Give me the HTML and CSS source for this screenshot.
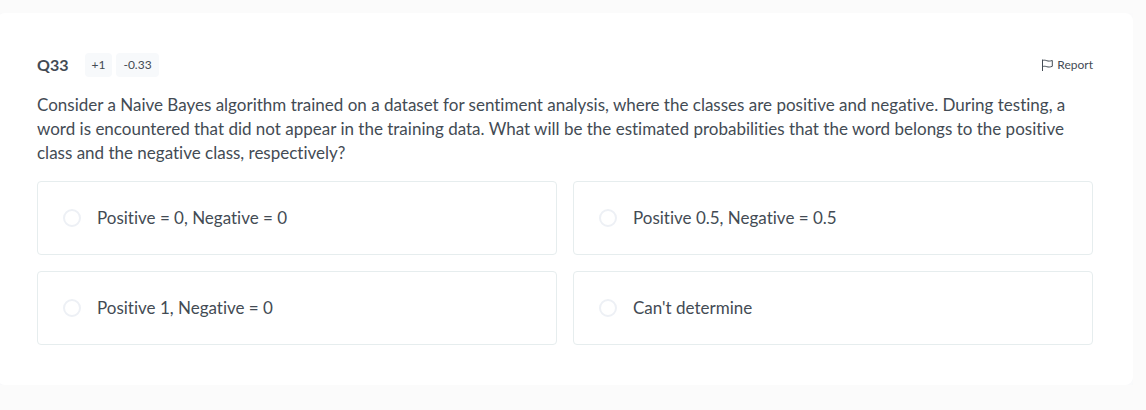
FILE: index.html
```html
<!DOCTYPE html>
<html lang="en">
<head>
    <meta charset="UTF-8">
    <meta name="viewport" content="width=device-width, initial-scale=1.0">
    <title>Question 33</title>
    <link rel="stylesheet" href="styles.css">
</head>
<body>
    <form class="card">
        <div class="header">
            <h1 class="number">Q33</h1>
            <div class="marks">
                <span class="mark">+1</span>
                <span class="mark">-0.33</span>
            </div>
            <button type="button" class="report">
                <svg class="flag" viewBox="0 0 12 12" width="12" height="12" fill="none" stroke="currentColor" aria-hidden="true">
                    <path d="M1.5 0.5V12M1.5 1.5C3 0.9 4.4 1.2 5.8 1.7C7.4 2.3 9 2.2 11.3 1.5V7.3C9 8.2 7.4 8.2 5.8 7.7C4.4 7.2 3 7.1 1.5 7.6"/>
                </svg>
                Report
            </button>
        </div>
        <p class="question" id="question">Consider a Naive Bayes algorithm trained on a dataset for sentiment analysis, where the classes are positive and negative. During testing, a word is encountered that did not appear in the training data. What will be the estimated probabilities that the word belongs to the positive class and the negative class, respectively?</p>
        <div class="options" role="radiogroup" aria-labelledby="question">
            <label class="option" for="a"><input type="radio" name="answer" id="a">Positive = 0, Negative = 0</label>
            <label class="option" for="b"><input type="radio" name="answer" id="b">Positive 0.5, Negative = 0.5</label>
            <label class="option" for="c"><input type="radio" name="answer" id="c">Positive 1, Negative = 0</label>
            <label class="option" for="d"><input type="radio" name="answer" id="d">Can't determine</label>
        </div>
    </form>
</body>
</html>
```
FILE: styles.css
```css
* {
    box-sizing: border-box;
}

body {
    margin: 13px 13px 0 -3px;
    background: #fbfbfb;
    color: #434b54;
    font-family: Lato, sans-serif;
    font-size: 17px;
    line-height: 24px;
    font-variant-ligatures: none;
}

.card {
    padding: 40px;
    background: #fff;
    border-radius: 8px;
    box-shadow: 0 8px 24px #f5f7fa;
}

.header {
    display: flex;
    align-items: center;
    gap: 16px;
}

.number {
    margin: 0;
    font-size: 16px;
    font-weight: bold;
}

.marks {
    display: flex;
    gap: 4px;
}

.mark {
    padding: 0 7px;
    background: #f7f9fb;
    border-radius: 4px;
    font-size: 12px;
}

.report {
    display: flex;
    align-items: center;
    gap: 4px;
    margin-left: auto;
    padding: 0;
    background: none;
    border: none;
    color: inherit;
    font: inherit;
    font-size: 12px;
    cursor: pointer;
}

.question {
    margin: 16px 0;
}

.options {
    display: grid;
    grid-template-columns: 1fr 1fr;
    gap: 16px;
}

.option {
    display: flex;
    align-items: center;
    gap: 16px;
    padding: 24px 25px;
    border: 1px solid #e6edee;
    border-radius: 4px;
    cursor: pointer;
}

.option input {
    appearance: none;
    width: 18px;
    height: 18px;
    margin: 0;
    border: 2px solid #edf0f5;
    border-radius: 50%;
}

.option input:checked {
    border: 4px solid #434b54;
}
```
